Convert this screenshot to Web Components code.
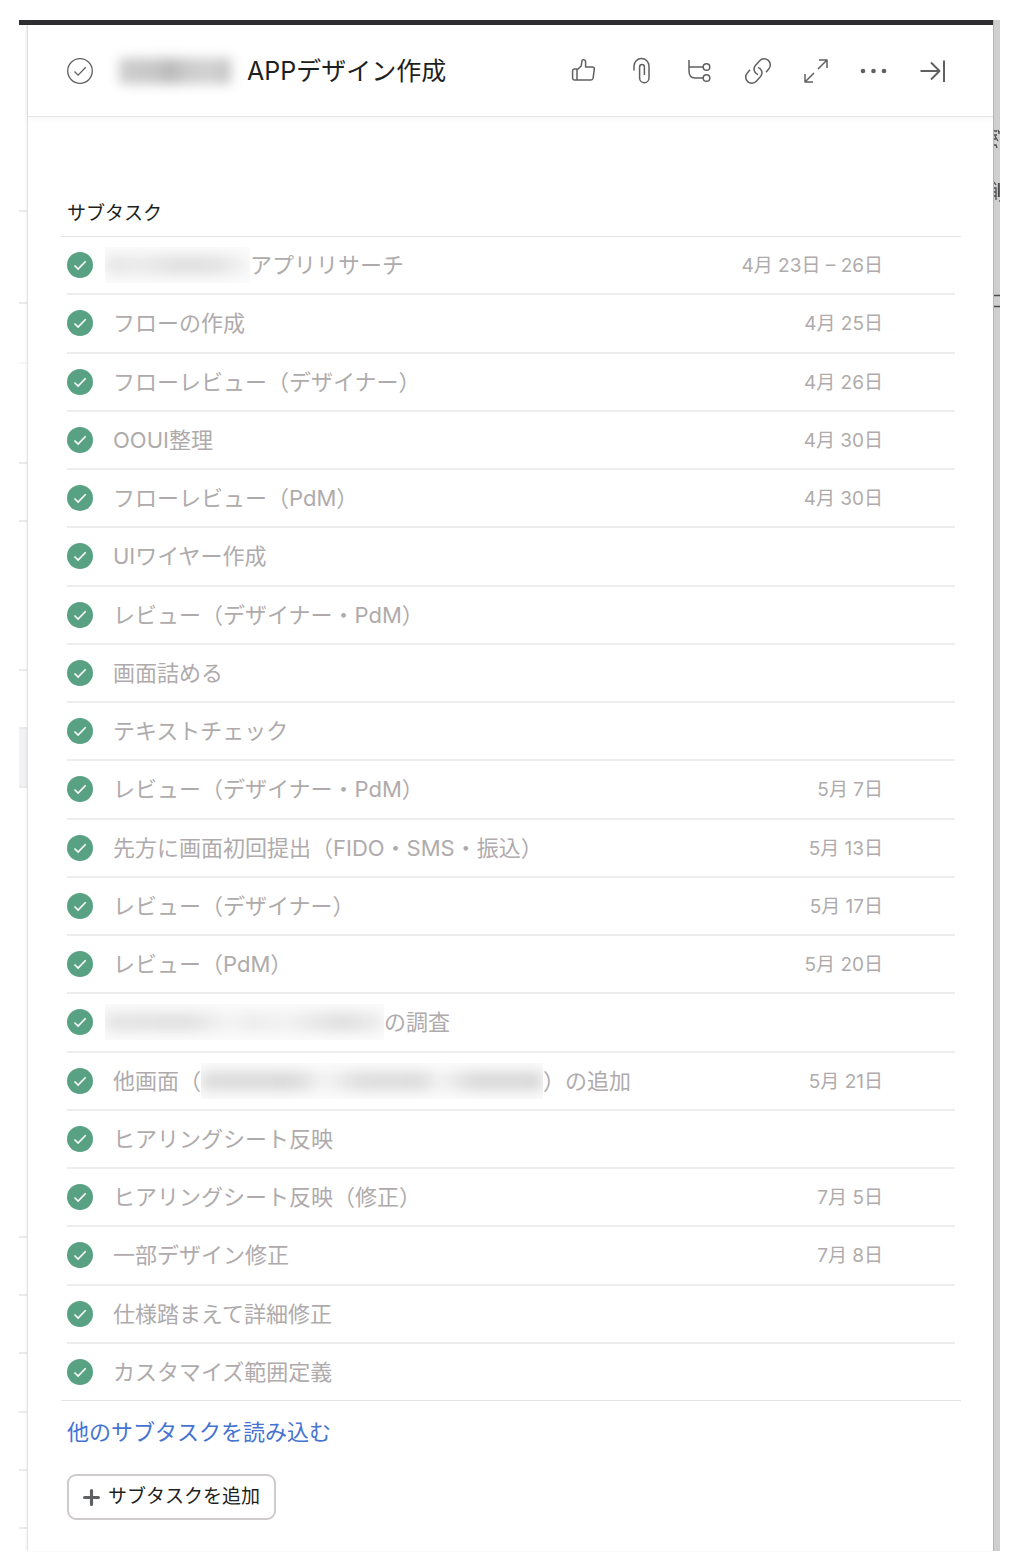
<!DOCTYPE html>
<html lang="ja">
<head>
<meta charset="utf-8">
<meta name="viewport" content="width=device-width, initial-scale=1">
<title>サブタスク</title>
<style>
html,body{margin:0;background:#fff}
body{font-family:Inter,"Noto Sans CJK JP",sans-serif;color:#1e1f21}
</style>
</head>
<body>
<task-app></task-app>
<script>
const define = (name, html, setup) => {
  const tpl = document.createElement('template');
  tpl.innerHTML = html;
  customElements.define(name, class extends HTMLElement {
    constructor() {
      super();
      this.attachShadow({mode: 'open'}).append(tpl.content.cloneNode(true));
    }
    connectedCallback() { if (setup) setup(this, this.shadowRoot); }
  });
};

// Obscured piece of a name: clipped box with soft grey smudges inside
define('blurred-name', `
<style>
:host{display:inline-flex;overflow:hidden;align-items:center;flex:none;height:36px;box-sizing:border-box;background:#fcfcfc}
i{display:block;flex:1;height:18px;filter:blur(7px);background:var(--smudge)}
:host([large]){height:60px;overflow:visible;background:none}
:host([large]) i{height:26px;margin:0 6px;filter:blur(6px)}
</style><i></i>`, (el) => {
  el.style.width = el.getAttribute('w') + 'px';
});

const ICONS = {
  like: '<path d="M7.5 12.5 11.2 9 12 3.6c.3-1.5 3.6-1.1 3.6 1.2V10h6.800c1.300 0 2.100.9 1.900 2.200l-1.200 9c-.2 1.200-.9 1.800-2.100 1.800H5.200M7 12.300v10.500M4.500 12H7v11H4.500A1.900 1.900 0 0 1 2.600 21.100v-7.200A1.900 1.900 0 0 1 4.500 12Z"/>',
  clip: '<path d="M6 13.500V9a7.500 7.500 0 0 1 15 0v12a4.700 4.700 0 0 1-9.400 0V10a2.400 2.400 0 0 1 4.800 0v8"/>',
  subtask: '<path d="M3 3v11c0 4.500 2 7 6 7h8M3 10h14"/><circle cx="20.500" cy="10" r="3.300"/><circle cx="20.500" cy="21" r="3.300"/>',
  link: '<path d="M10.800 14.800a5.800 5.800 0 0 1 .6-6.300l4.300-4.700a6 6 0 0 1 9 8.200L22 15.200M17.200 13.200a5.800 5.800 0 0 1-.6 6.300l-4.300 4.700a6 6 0 0 1-9-8.200L6 12.800M10.800 14.800c.6 1.200 1.700 2.200 3.200 2.800M17.200 13.200c-.6-1.200-1.700-2.200-3.200-2.800"/>',
  expand: '<path d="M17 3h8v8M25 3l-9 9M3 17v8h8M3 25l9-9"/>',
  more: '<g fill="currentColor" stroke="none"><circle cx="3" cy="14" r="2.300"/><circle cx="13.500" cy="14" r="2.300"/><circle cx="24" cy="14" r="2.300"/></g>',
  close: '<path stroke-width="2" d="M2.500 14h19M13 5.500l8.500 8.500-8.500 8.500M26 3.500v21.500"/>'
};
define('tool-button', `
<style>
:host{display:block}
button{display:flex;padding:0;border:0;background:none;color:#5f6061;cursor:pointer}
svg{display:block;width:28px;height:28px;fill:none;stroke:currentColor;stroke-width:1.5;stroke-linejoin:round}
</style>
<button type="button"><svg viewBox="0 0 28 28" aria-hidden="true"></svg></button>`, (el, root) => {
  root.querySelector('svg').innerHTML = ICONS[el.getAttribute('icon')];
  root.querySelector('button').setAttribute('aria-label', el.getAttribute('label'));
});

define('check-toggle', `
<style>
:host{display:block;flex:none}
button{display:block;padding:0;border:0;background:none;cursor:pointer}
svg{display:block;width:26px;height:26px;fill:none;stroke:#5f6061;stroke-width:1.3}
:host([done]) circle{fill:#58a182;stroke:none;r:13px}
:host([done]) path{stroke:#fff;stroke-width:1.6}
</style>
<button type="button"><svg viewBox="0 0 26 26" aria-hidden="true"><circle cx="13" cy="13" r="12.300"/><path d="M7.500 13.500l3.600 3.600 7.600-7.900"/></svg></button>`, (el, root) => {
  const b = root.querySelector('button');
  b.setAttribute('aria-label', '完了');
  b.setAttribute('aria-pressed', el.hasAttribute('done'));
});

define('task-header', `
<style>
:host{display:flex;align-items:center;flex:none;height:91px;padding:0 47px 0 39px;border-bottom:1px solid #e6e5e5;box-shadow:0 2px 6px #0000000a}
h1{flex:1;display:flex;align-items:center;gap:10px;margin:0 0 0 20px;font-size:25px;line-height:36px;font-weight:400;white-space:nowrap}
nav{display:flex;gap:30px}
blurred-name{--smudge:linear-gradient(90deg,#cdcdcd,#c6c6c6 35%,#b8b8b8 45%,#cbcbcb 60%,#d2d2d2 80%,#c4c4c4)}
</style>
<check-toggle></check-toggle>
<h1><blurred-name large w="124"></blurred-name><span>APPデザイン作成</span></h1>
<nav aria-label="タスクの操作">
<tool-button icon="like" label="いいね"></tool-button>
<tool-button icon="clip" label="添付"></tool-button>
<tool-button icon="subtask" label="サブタスク"></tool-button>
<tool-button icon="link" label="リンク"></tool-button>
<tool-button icon="expand" label="全画面"></tool-button>
<tool-button icon="more" label="その他"></tool-button>
<tool-button icon="close" label="閉じる"></tool-button>
</nav>`);

define('subtask-row', `
<style>
:host{display:flex;align-items:center;margin:0 6px;border-bottom:2px solid #ededed;box-sizing:border-box;color:#afabac}
:host(:last-child){border-bottom-color:transparent}
.name{flex:1;display:flex;align-items:center;margin-left:20px;font-size:22px;line-height:32px;white-space:nowrap}
.date{margin-right:72px;padding-top:2px;font-size:19px;line-height:28px;white-space:nowrap}
</style>
<check-toggle done></check-toggle>
<span class="name"><slot></slot></span><span class="date"></span>`, (el, root) => {
  root.querySelector('.date').textContent = el.getAttribute('date') || '';
});

define('subtask-list', `
<style>
:host{flex:1;display:flex;flex-direction:column;padding:82px 32px 0 33px}
h2{margin:0 0 7px 6px;font-size:19px;line-height:30px;font-weight:400}
.rows{flex:1;display:grid;grid-auto-rows:minmax(54px,1fr);margin-bottom:-2px;border-top:1px solid #e4e4e4}
blurred-name{--smudge:linear-gradient(90deg,#e3e3e3,#e8e8e8 25%,#dcdcdc 50%,#dedede 75%,#f4f4f4)}
.first{margin-left:-8px}
.long{--smudge:linear-gradient(90deg,#e2e2e2,#dedede 30%,#f3f3f3 45%,#eaeaea 52%,#f0f0f0 65%,#dadada 85%,#ededed)}
.screens{--smudge:linear-gradient(90deg,#d8d8d8,#d6d6d6 28%,#f4f4f4 36%,#dadada 46%,#d8d8d8 64%,#f2f2f2 70%,#d6d6d6 80%,#d4d4d4)}
</style>
<h2>サブタスク</h2>
<div class="rows">
<subtask-row date="4月 23日 – 26日"><blurred-name class="first" w="145"></blurred-name>アプリリサーチ</subtask-row>
<subtask-row date="4月 25日">フローの作成</subtask-row>
<subtask-row date="4月 26日">フローレビュー（デザイナー）</subtask-row>
<subtask-row date="4月 30日">OOUI整理</subtask-row>
<subtask-row date="4月 30日">フローレビュー（PdM）</subtask-row>
<subtask-row>UIワイヤー作成</subtask-row>
<subtask-row>レビュー（デザイナー・PdM）</subtask-row>
<subtask-row>画面詰める</subtask-row>
<subtask-row>テキストチェック</subtask-row>
<subtask-row date="5月 7日">レビュー（デザイナー・PdM）</subtask-row>
<subtask-row date="5月 13日">先方に画面初回提出（FIDO・SMS・振込）</subtask-row>
<subtask-row date="5月 17日">レビュー（デザイナー）</subtask-row>
<subtask-row date="5月 20日">レビュー（PdM）</subtask-row>
<subtask-row><blurred-name class="first long" w="279"></blurred-name>の調査</subtask-row>
<subtask-row date="5月 21日">他画面（<blurred-name class="screens" w="342"></blurred-name>）の追加</subtask-row>
<subtask-row>ヒアリングシート反映</subtask-row>
<subtask-row date="7月 5日">ヒアリングシート反映（修正）</subtask-row>
<subtask-row date="7月 8日">一部デザイン修正</subtask-row>
<subtask-row>仕様踏まえて詳細修正</subtask-row>
<subtask-row>カスタマイズ範囲定義</subtask-row>
</div>`);

define('subtask-footer', `
<style>
:host{display:flex;flex-direction:column;align-items:flex-start;gap:26px;margin:0 32px 0 33px;padding:15px 6px 31px;border-top:1px solid #e4e4e4}
a{font-size:22px;line-height:32px;color:#4573d2;text-decoration:none}
button{display:flex;align-items:center;gap:8px;height:46px;box-sizing:border-box;padding:0 14px;border:2px solid #cfcbcb;border-radius:9px;background:#fff;color:inherit;font:inherit;font-size:19px;line-height:28px;cursor:pointer}
svg{width:17px;height:17px;stroke:#5f6061;stroke-width:3;stroke-linecap:round}
</style>
<a href="#more">他のサブタスクを読み込む</a>
<button type="button"><svg viewBox="0 0 16 16" aria-hidden="true"><path d="M8 1.500v13M1.500 8h13"/></svg>サブタスクを追加</button>`);

// Sliver of the task list that shows to the left of the pane
define('list-edge', `
<style>
:host{display:flex;flex-direction:column;flex:none;width:8px;overflow:hidden}
div{flex:none;box-sizing:border-box;border-bottom:2px solid #ebebeb}
.soft{border-color:#f7f7f7}
.selected{background:#f2f2f4}
</style>`, (el, root) => {
  for (const h of [187, 92, 60, 100, 58, 149, 58, 59, 450, 58, 58, 59, 58, 58]) {
    const d = document.createElement('div');
    d.style.height = h + 'px';
    if (h === 60) d.className = 'soft';
    if (root.querySelectorAll('div').length === 7) d.className = 'selected';
    root.append(d);
  }
});

// Dimmed sliver of the page that shows to the right of the pane
define('page-edge', `
<style>
:host{display:flex;flex-direction:column;flex:none;width:7px;box-sizing:border-box;overflow:hidden;background:#cfcfcf;border-left:1px solid #b5b5b5;padding-top:107px}
svg{display:block;flex:none;width:6px;height:184px;fill:none;stroke:#4c4d50;stroke-width:1.3}
</style>
<svg viewBox="0 0 6 184" aria-hidden="true"><path d="M0 4h3M4 3l1 3M0 8h3M1 9l3 5M5 4v3M0 12h2M0 18h2l1 3M0 55l2 3M0 61h2v12M0 65h2M0 69h2M4.500 56v14M6 56v14M6 73v2M0 168.500h6M0 179.500h6"/></svg>`);

define('task-app', `
<style>
:host{display:flex;min-height:100vh;box-sizing:border-box;padding:20px 22px 5px 19px}
.main{flex:1;display:flex;flex-direction:column;min-width:0}
.bar{flex:none;height:5px;background:#2e2e30}
.body{flex:1;display:flex}
main{flex:1;display:flex;flex-direction:column;min-width:0;border-left:1px solid #e3e3e3;background:#fff;box-shadow:-1px 0 2px #0000000d}
</style>
<div class="main"><div class="bar"></div><div class="body"><list-edge></list-edge>
<main><task-header></task-header><subtask-list></subtask-list><subtask-footer></subtask-footer></main></div></div>
<page-edge></page-edge>`);
</script>
</body>
</html>
